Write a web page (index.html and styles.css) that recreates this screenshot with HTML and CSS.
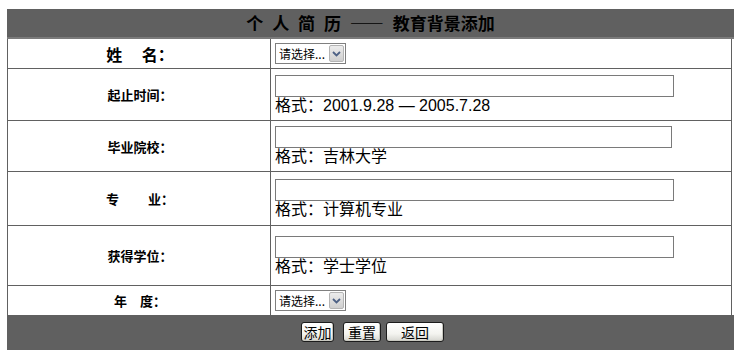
FILE: index.html
```html
<!DOCTYPE html>
<html lang="zh-CN">
<head>
<meta charset="utf-8">
<title>个人简历 —— 教育背景添加</title>
<link rel="stylesheet" href="styles.css">
</head>
<body>
<form class="resume">
  <div class="head">个 人 简 历 —— 教育背景添加</div>
  <div class="rows">
    <div class="row row-sel">
      <div class="label label-big">姓　 名：</div>
      <div class="field">
        <span class="combo"><select class="sel"><option>请选择...</option></select><span class="arrow"><svg width="9" height="6" viewBox="0 0 9 6"><path d="M1 1 L4.5 4.5 L8 1" fill="none" stroke="#4d6185" stroke-width="1.8"/></svg></span></span>
      </div>
    </div>
    <div class="row row-a">
      <div class="label">起止时间：</div>
      <div class="field">
        <input class="txt" type="text">
        <div class="hint">格式：2001.9.28 — 2005.7.28</div>
      </div>
    </div>
    <div class="row row-b">
      <div class="label">毕业院校：</div>
      <div class="field">
        <input class="txt txt-narrow" type="text">
        <div class="hint">格式：吉林大学</div>
      </div>
    </div>
    <div class="row row-c">
      <div class="label">专　　 业：</div>
      <div class="field">
        <input class="txt" type="text">
        <div class="hint">格式：计算机专业</div>
      </div>
    </div>
    <div class="row row-d">
      <div class="label">获得学位：</div>
      <div class="field">
        <input class="txt" type="text">
        <div class="hint">格式：学士学位</div>
      </div>
    </div>
    <div class="row row-sel row-last">
      <div class="label">年　度：</div>
      <div class="field">
        <span class="combo"><select class="sel"><option>请选择...</option></select><span class="arrow"><svg width="9" height="6" viewBox="0 0 9 6"><path d="M1 1 L4.5 4.5 L8 1" fill="none" stroke="#4d6185" stroke-width="1.8"/></svg></span></span>
      </div>
    </div>
  </div>
  <div class="foot">
    <button type="button" class="btn btn-add">添加</button>
    <button type="button" class="btn btn-reset">重置</button>
    <button type="button" class="btn btn-back">返回</button>
  </div>
</form>
</body>
</html>
```
FILE: styles.css
```css
html, body {
  margin: 0;
  padding: 0;
  background: #fff;
}
body {
  padding: 9px 0 0 7px;
  font-family: "Liberation Sans", "Noto Sans CJK SC", sans-serif;
  color: #000;
}
.resume {
  width: 727px;
  margin: 0;
}
.head {
  height: 28px;
  line-height: 28px;
  background: #606060;
  border-bottom: 2px solid #7b7b7b;
  text-align: center;
  font-family: "Noto Sans CJK SC", sans-serif;
  font-weight: bold;
  font-size: 17px;
  word-spacing: 5px;
  white-space: pre;
  color: #000;
}
.rows {
  width: 725px;
  box-sizing: border-box;
  border-left: 1px solid #616161;
  border-right: 1px solid #616161;
}
.row {
  display: grid;
  grid-template-columns: 263px 1fr;
  border-bottom: 1px solid #616161;
}
.row-last { border-bottom: none; }
.row-sel { height: 29px; }
.row-a { height: 51px; }
.row-b { height: 50px; }
.row-c { height: 53px; }
.row-d { height: 59px; }
.label {
  border-right: 1px solid #616161;
  display: flex;
  align-items: center;
  justify-content: center;
  font-family: "Noto Sans CJK SC", sans-serif;
  font-weight: bold;
  font-size: 13px;
  white-space: pre;
  padding-left: 2px;
}
.label-big { font-size: 16px; }
.field {
  display: flex;
  flex-direction: column;
  justify-content: center;
  align-items: flex-start;
  padding-left: 4px;
}
.txt {
  box-sizing: border-box;
  width: 399px;
  height: 22px;
  margin: 0;
  border: 1px solid #7a7a7a;
  padding: 0 2px;
  background: #fff;
}
.txt-narrow { width: 397px; }
.hint {
  font-size: 16px;
  line-height: 18px;
  height: 18px;
  white-space: nowrap;
}
.combo {
  position: relative;
  display: inline-block;
  width: 71px;
  height: 21px;
}
.sel {
  appearance: none;
  -webkit-appearance: none;
  box-sizing: border-box;
  width: 71px;
  height: 21px;
  margin: 0;
  border: 1px solid #7f7f7f;
  background: #fff;
  padding: 0 0 0 3px;
  font-family: "Noto Sans CJK SC", sans-serif;
  font-size: 12px;
  color: #000;
  border-radius: 0;
}
.arrow {
  position: absolute;
  top: 2px;
  right: 2px;
  width: 15px;
  height: 17px;
  box-sizing: border-box;
  border: 1px solid #b4b4b4;
  border-radius: 2px;
  background: linear-gradient(#ececec, #cfcfcf);
  display: flex;
  align-items: center;
  justify-content: center;
  pointer-events: none;
}
.foot {
  height: 35px;
  background: #606060;
  display: flex;
  justify-content: center;
  align-items: flex-start;
  padding: 7px 0 0 4px;
  box-sizing: border-box;
}
.btn {
  box-sizing: border-box;
  height: 20px;
  margin: 0;
  padding: 0;
  border: 1px solid #1c1c1c;
  border-radius: 3px;
  background: linear-gradient(#ffffff 0%, #f4f4f0 60%, #d6d6d0 100%);
  box-shadow: inset -1px -1px 0 #c8c8c0;
  font-family: "Noto Sans CJK SC", sans-serif;
  font-size: 14px;
  line-height: 18px;
  color: #000;
}
.btn-add { width: 33px; }
.btn-reset { width: 38px; margin-left: 9px; }
.btn-back { width: 58px; margin-left: 5px; }
```
